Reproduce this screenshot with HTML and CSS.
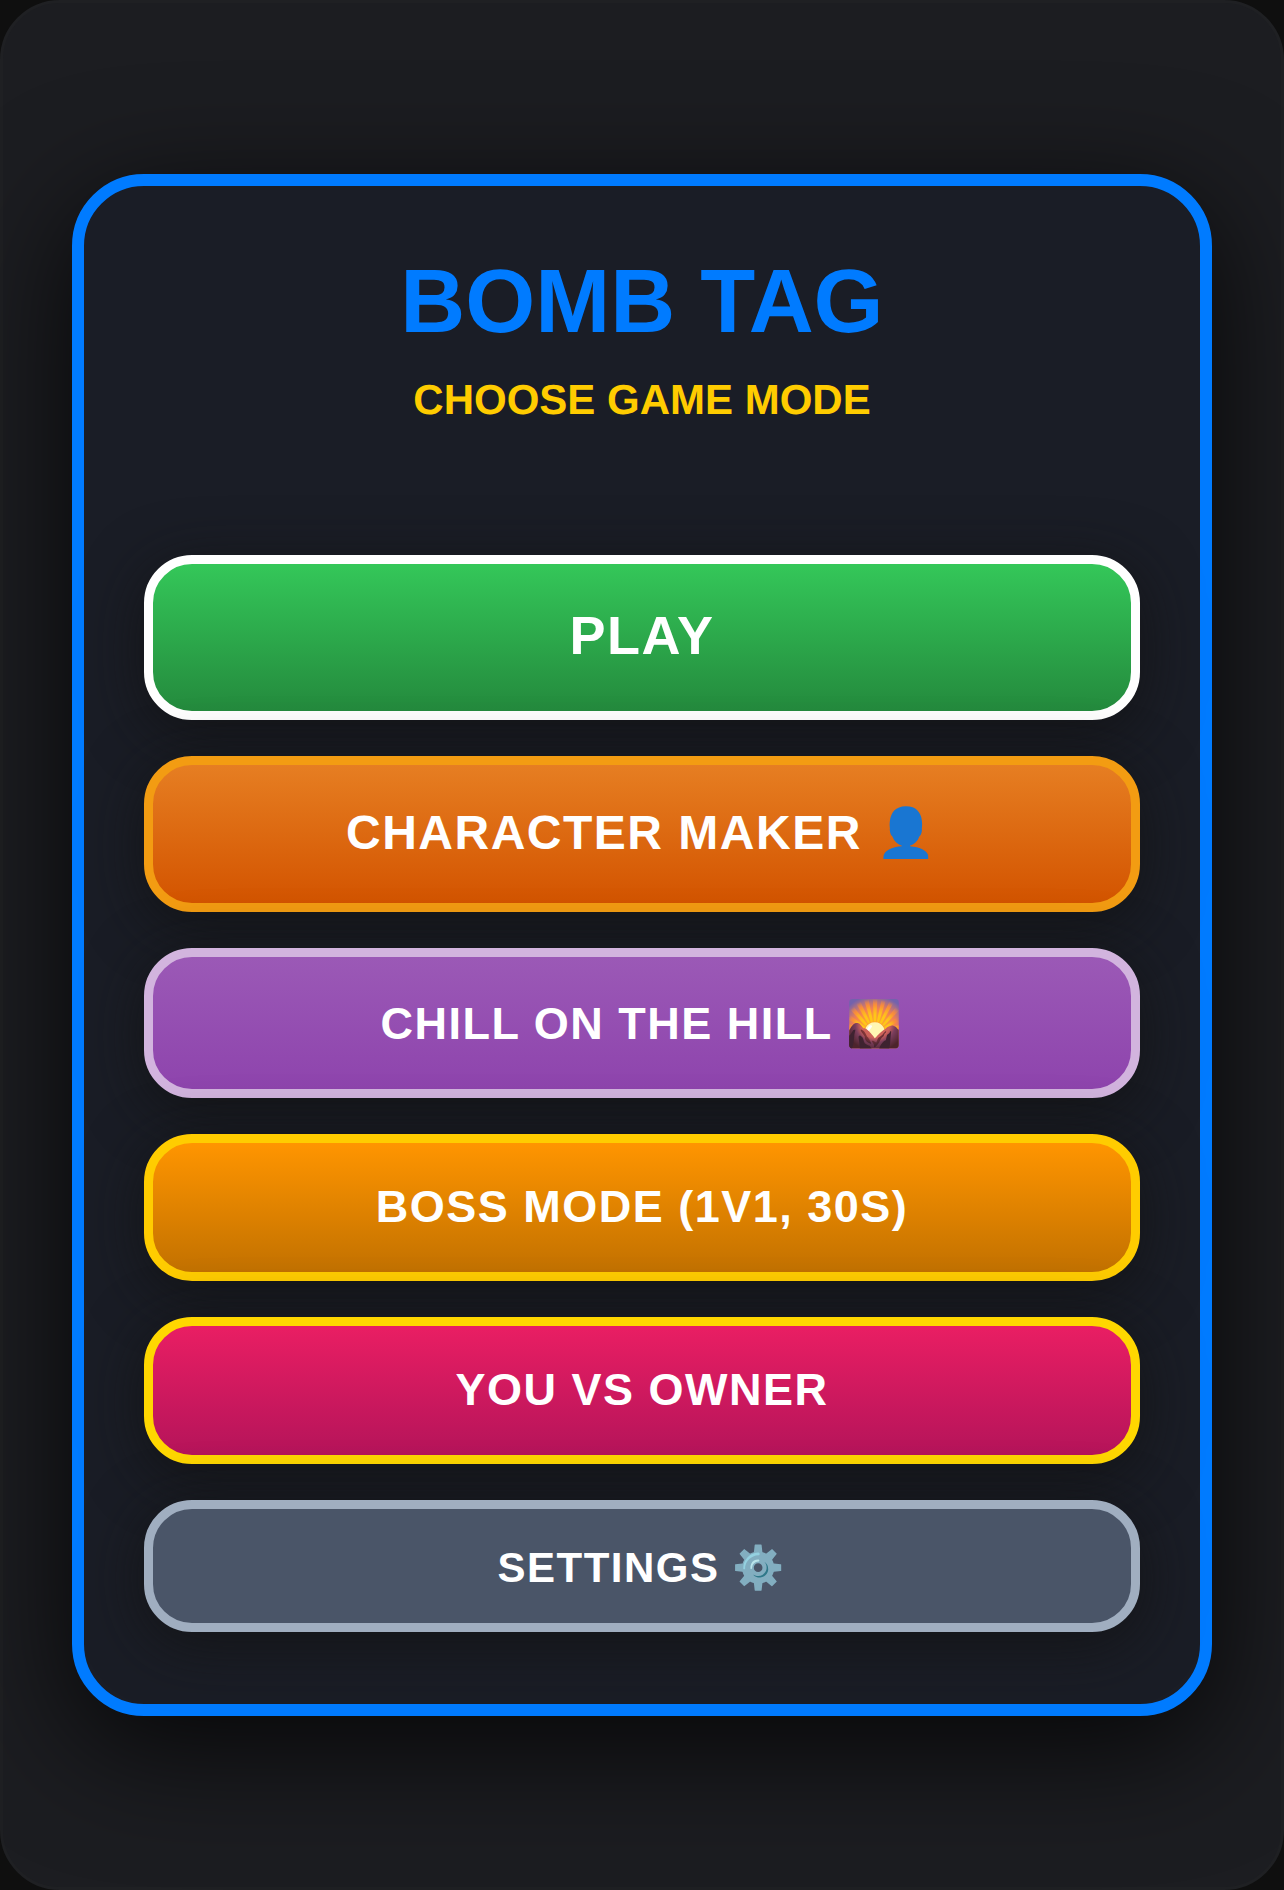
FILE: index.html
```html
<!DOCTYPE html>
<html lang="en">
<head>
  <meta charset="UTF-8" />
  <title>Bomb Tag</title>
  <link rel="stylesheet" href="styles.css">
</head>
<body>
  <div class="phone">
    <main class="card">
      <header class="head">
        <h1>BOMB TAG</h1>
        <p class="sub">CHOOSE GAME MODE</p>
      </header>
      <div class="modes">
        <button class="mode play">PLAY</button>
        <button class="mode maker">CHARACTER MAKER 👤</button>
        <button class="mode chill">CHILL ON THE HILL 🌄</button>
        <button class="mode boss">BOSS MODE (1V1, 30S)</button>
        <button class="mode owner">YOU VS OWNER</button>
        <button class="mode settings">SETTINGS ⚙️</button>
      </div>
    </main>
  </div>
</body>
</html>
```
FILE: styles.css
```css
* {
  margin: 0;
  padding: 0;
  box-sizing: border-box;
}

body {
  background: #0f0f0f;
  font-family: "Liberation Sans", Arial, "Noto Color Emoji", sans-serif;
  text-rendering: geometricPrecision;
  color: white;
  width: 1284px;
  height: 1890px;
  overflow: hidden;
}

.phone {
  width: 1284px;
  height: 1890px;
  padding-top: 171px;
  background: #1c1d21;
  border: 3px solid #1f2023;
  border-radius: 60px;
  display: flex;
  flex-direction: column;
  align-items: center;
}

.card {
  width: 1140px;
  height: 1542px;
  padding: 72px 60px;
  background: #1a1d26;
  border: 12px solid #007bff;
  border-radius: 72px;
  box-shadow: 0 30px 120px rgba(0, 0, 0, 0.8);
}

.head {
  text-align: center;
  height: 297px;
}

h1 {
  font-size: 90px;
  line-height: 88px;
  font-weight: bold;
  color: #007bff;
  margin-bottom: 30px;
}

.sub {
  font-size: 42px;
  line-height: 48px;
  font-weight: bold;
  color: #ffcc00;
}

.modes {
  display: flex;
  flex-direction: column;
  gap: 36px;
}

.mode {
  width: 100%;
  border: 9px solid white;
  border-radius: 48px;
  font-family: inherit;
  font-weight: bold;
  color: white;
  letter-spacing: 1.5px;
  box-shadow: 0 12px 60px rgba(18, 18, 18, 0.75);
  cursor: pointer;
}

.play {
  height: 165px;
  padding-bottom: 6px;
  font-size: 54px;
  background: linear-gradient(to bottom, #34c759, #248a3d);
  border-color: white;
}

.maker {
  height: 156px;
  padding-bottom: 4px;
  font-size: 48px;
  background: linear-gradient(to bottom, #e67e22, #d35400);
  border-color: #f39c12;
}

.chill {
  height: 150px;
  font-size: 45px;
  background: linear-gradient(to bottom, #9b59b6, #8e44ad);
  border-color: #d2b4de;
}

.boss {
  height: 147px;
  padding-bottom: 2px;
  font-size: 45px;
  background: linear-gradient(to bottom, #ff9500, #c27100);
  border-color: #ffcc00;
}

.owner {
  height: 147px;
  padding-bottom: 2px;
  font-size: 45px;
  background: linear-gradient(to bottom, #e91e63, #b5145a);
  border-color: #ffd700;
}

.settings {
  height: 132px;
  padding-top: 2px;
  font-size: 42px;
  background: #4a5568;
  border-color: #a0aec0;
}
```
